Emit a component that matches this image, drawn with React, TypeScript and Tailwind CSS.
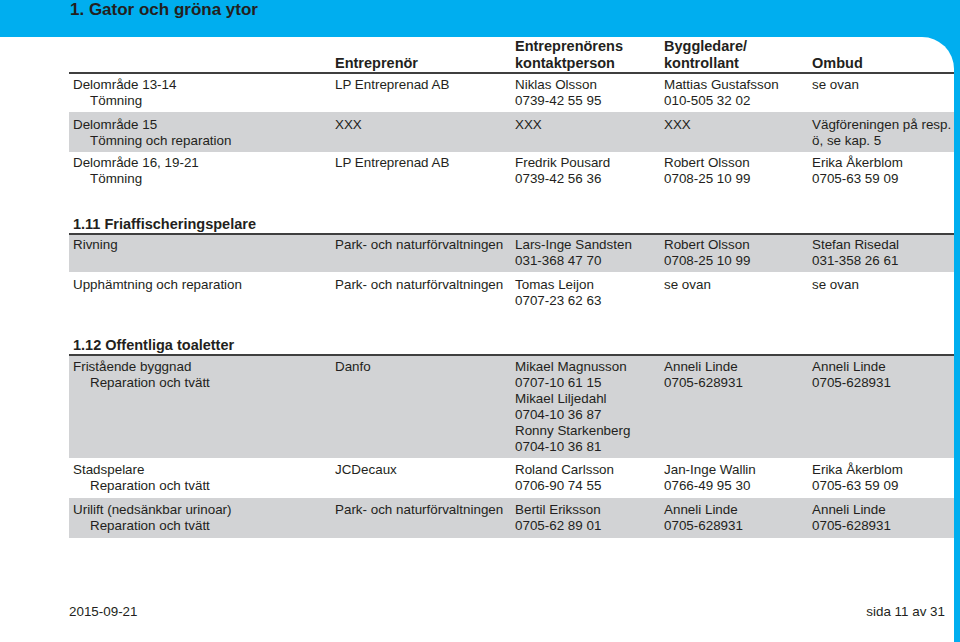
import React from 'react';

type Row = {
  area: string[];
  contractor: string;
  contact: string[];
  supervisor: string[];
  agent: string[];
  gray?: boolean;
  pad: string;
};

const grid = 'grid grid-cols-[262px_180px_149px_148px_1fr] pl-[4px]';

const section1: Row[] = [
  {
    area: ['Delområde 13-14', 'Tömning'],
    contractor: 'LP Entreprenad AB',
    contact: ['Niklas Olsson', '0739-42 55 95'],
    supervisor: ['Mattias Gustafsson', '010-505 32 02'],
    agent: ['se ovan'],
    pad: 'pt-[3px] pb-[3px]'
  },
  {
    area: ['Delområde 15', 'Tömning och reparation'],
    contractor: 'XXX',
    contact: ['XXX'],
    supervisor: ['XXX'],
    agent: ['Vägföreningen på resp.', 'ö, se kap. 5'],
    gray: true,
    pad: 'pt-[5px] pb-[3px]'
  },
  {
    area: ['Delområde 16, 19-21', 'Tömning'],
    contractor: 'LP Entreprenad AB',
    contact: ['Fredrik Pousard', '0739-42 56 36'],
    supervisor: ['Robert Olsson', '0708-25 10 99'],
    agent: ['Erika Åkerblom', '0705-63 59 09'],
    pad: 'pt-[3px] pb-0'
  }
];

const section111: Row[] = [
  {
    area: ['Rivning'],
    contractor: 'Park- och naturförvaltningen',
    contact: ['Lars-Inge Sandsten', '031-368 47 70'],
    supervisor: ['Robert Olsson', '0708-25 10 99'],
    agent: ['Stefan Risedal', '031-358 26 61'],
    gray: true,
    pad: 'pt-[2px] pb-[3px]'
  },
  {
    area: ['Upphämtning och reparation'],
    contractor: 'Park- och naturförvaltningen',
    contact: ['Tomas Leijon', '0707-23 62 63'],
    supervisor: ['se ovan'],
    agent: ['se ovan'],
    pad: 'pt-[5px] pb-0'
  }
];

const section112: Row[] = [
  {
    area: ['Fristående byggnad', 'Reparation och tvätt'],
    contractor: 'Danfo',
    contact: [
      'Mikael Magnusson',
      '0707-10 61 15',
      'Mikael Liljedahl',
      '0704-10 36 87',
      'Ronny Starkenberg',
      '0704-10 36 81'
    ],
    supervisor: ['Anneli Linde', '0705-628931'],
    agent: ['Anneli Linde', '0705-628931'],
    gray: true,
    pad: 'pt-[3px] pb-[3px]'
  },
  {
    area: ['Stadspelare', 'Reparation och tvätt'],
    contractor: 'JCDecaux',
    contact: ['Roland Carlsson', '0706-90 74 55'],
    supervisor: ['Jan-Inge Wallin', '0766-49 95 30'],
    agent: ['Erika Åkerblom', '0705-63 59 09'],
    pad: 'pt-[4px] pb-[4px]'
  },
  {
    area: ['Urilift (nedsänkbar urinoar)', 'Reparation och tvätt'],
    contractor: 'Park- och naturförvaltningen',
    contact: ['Bertil Eriksson', '0705-62 89 01'],
    supervisor: ['Anneli Linde', '0705-628931'],
    agent: ['Anneli Linde', '0705-628931'],
    gray: true,
    pad: 'pt-[4px] pb-[4px]'
  }
];

function Lines({ items }: { items: string[] }) {
  return (
    <div>
      {items.map((t, i) =>
      <div key={i} className="whitespace-nowrap">{t}</div>
      )}
    </div>);

}

function TableRow({ row }: { row: Row }) {
  return (
    <div className={`${grid} ${row.pad} ${row.gray ? 'bg-[#d2d3d5]' : ''}`}>
      <div>
        {row.area.map((t, i) =>
        <div key={i} className={`whitespace-nowrap ${i > 0 ? 'pl-[17px]' : ''}`}>
            {t}
          </div>
        )}
      </div>
      <div className="whitespace-nowrap">{row.contractor}</div>
      <Lines items={row.contact} />
      <Lines items={row.supervisor} />
      <Lines items={row.agent} />
    </div>);

}

function SectionHeading({ title, className }: { title: string; className: string }) {
  return (
    <div
      className={`${className} pl-[4px] border-b-2 border-[#3f3f3f] text-[14.5px] leading-[17px] font-bold`}>
      {title}
    </div>);

}

export default function App() {
  return (
    <div
      className="w-[960px] h-[642px] bg-[#00aeef] flex flex-col overflow-hidden text-[#231f20]"
      style={{ fontFamily: '"Liberation Sans", Arial, sans-serif' }}>
      {/* Blue title band */}
      <div className="h-[37px] shrink-0 pl-[70px] pt-[0px] text-[17px] leading-[20px] font-bold">
        1. Gator och gröna ytor
      </div>

      {/* White page */}
      <div className="flex-1 mr-[6px] bg-white rounded-tr-[32px] pl-[69px] text-[13.4px] leading-[16px] flex flex-col">
        {/* Column headers */}
        <div className={`${grid} pt-[1px] items-end border-b-2 border-[#3f3f3f] text-[14.5px] leading-[17px] font-bold`}>
          <div />
          <div>Entreprenör</div>
          <div>
            <div>Entreprenörens</div>
            <div>kontaktperson</div>
          </div>
          <div>
            <div>Byggledare/</div>
            <div>kontrollant</div>
          </div>
          <div>Ombud</div>
        </div>

        {section1.map((r, i) =>
        <TableRow key={i} row={r} />
        )}

        <SectionHeading title="1.11 Friaffischeringspelare" className="mt-[29px]" />
        {section111.map((r, i) =>
        <TableRow key={i} row={r} />
        )}

        <SectionHeading title="1.12 Offentliga toaletter" className="mt-[28px]" />
        {section112.map((r, i) =>
        <TableRow key={i} row={r} />
        )}

        {/* Footer */}
        <div className="mt-[66px] flex justify-between pr-[9px] text-[13.4px] leading-[16px]">
          <span>2015-09-21</span>
          <span>sida 11 av 31</span>
        </div>
      </div>
    </div>);

}
